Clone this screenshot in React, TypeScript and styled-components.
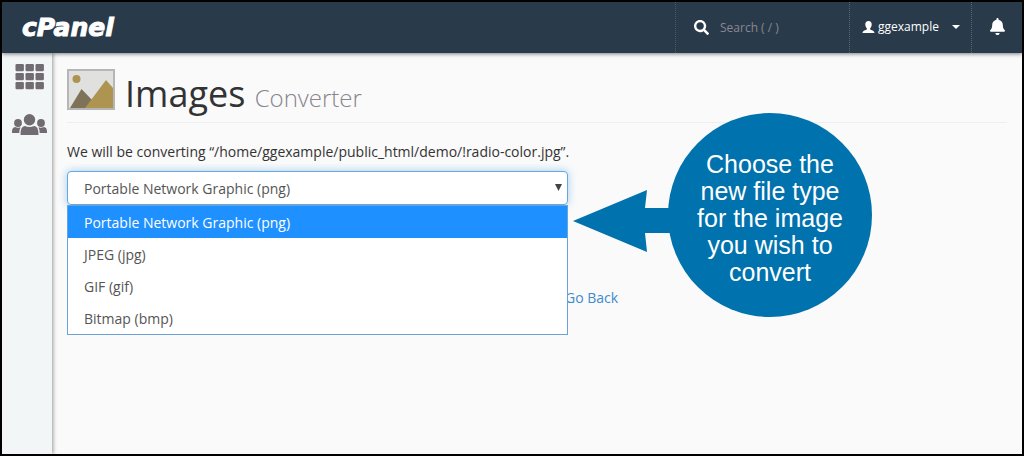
import React from "react";
import styled, { createGlobalStyle } from "styled-components";
import { FaSearch, FaBell } from "react-icons/fa";

const GlobalStyle = createGlobalStyle`
  *, *::before, *::after { box-sizing: border-box; }
  body {
    margin: 0;
    background: #fafafa;
    color: #333;
    font: 14px/20px "Open Sans", sans-serif;
  }
`;

const Frame = styled.div`
  display: flex;
  flex-direction: column;
  min-height: 100vh;
  border: 2px solid #000;
  position: relative;
  overflow: hidden;
`;

const Header = styled.header`
  display: flex;
  align-items: stretch;
  justify-content: space-between;
  height: 51px;
  background: #293a4a;
  color: #fff;
  box-shadow: 0 1px 4px rgba(0, 0, 0, 0.5);
  z-index: 1;
`;

const Logo = styled.a`
  display: flex;
  align-items: center;
  padding-left: 20px;
  color: #fff;
  font: italic bold 25px/25px "DejaVu Sans", sans-serif;
  -webkit-text-stroke: 1px #fff;
  text-decoration: none;
`;

const Tools = styled.div`
  display: flex;
  align-items: stretch;
`;

const SearchBox = styled.label`
  display: flex;
  align-items: center;
  gap: 11px;
  width: 174px;
  padding-left: 18px;
  border-left: 1px dotted #4a5967;
`;

const SearchInput = styled.input`
  width: 110px;
  padding: 0;
  border: 0;
  outline: 0;
  background: transparent;
  color: #fff;
  font: 12px/20px "Open Sans", sans-serif;
  &::placeholder { color: #8b8791; opacity: 1; }
`;

const HeaderButton = styled.button<{ $width: number; $inset?: number }>`
  display: flex;
  align-items: center;
  gap: 3px;
  width: ${(p) => p.$width}px;
  padding: 0 0 2px ${(p) => p.$inset ?? 12}px;
  border: 0;
  border-left: 1px dotted #586673;
  background: transparent;
  color: #fff;
  font: 500 12px/20px "Open Sans", sans-serif;
`;

const Caret = styled.span`
  margin-left: 10px;
  border: 4px solid transparent;
  border-top-color: #fff;
  border-bottom: 0;
`;

const Body = styled.div`
  display: flex;
  flex: 1;
`;

const Sidebar = styled.nav`
  display: flex;
  flex-direction: column;
  gap: 24px;
  width: 50px;
  padding: 11px 0 0 10px;
  background: #f3f6f6;
  box-shadow: 1px 0 4px rgba(0, 0, 0, 0.4);
`;

const SideLink = styled.a`
  display: block;
  color: #716b72;
  svg { display: block; }
`;

const Main = styled.main`
  flex: 1;
  padding: 12px 0 0 15px;
`;

const TitleBar = styled.div`
  display: flex;
  align-items: flex-start;
  gap: 10px;
  height: 58px;
  padding-top: 4px;
  margin-right: 15px;
  border-bottom: 1px solid #eee;
`;

const Title = styled.h1`
  margin: 0;
  font-size: 36px;
  line-height: 49px;
  font-weight: 400;
  small {
    color: #88858d;
    font-size: 24px;
    font-weight: 300;
  }
`;

const Intro = styled.p`
  margin: 19px 0 9px;
`;

const Picker = styled.div`
  position: relative;
  width: 501px;
`;

const Select = styled.select`
  display: block;
  width: 100%;
  height: 34px;
  padding: 2px 16px 0;
  appearance: none;
  border: 1px solid #66a9e0;
  border-radius: 4px;
  outline: 0;
  background: #fff;
  box-shadow: 0 0 8px rgba(102, 175, 233, 0.6);
  color: #555;
  font: 14px/20px "Open Sans", sans-serif;
`;

const SelectArrow = styled.svg`
  position: absolute;
  top: 13px;
  right: 6px;
  pointer-events: none;
`;

const Options = styled.ul`
  position: absolute;
  top: 34px;
  left: 0;
  width: 100%;
  margin: 0;
  padding: 0;
  border: 1px solid #6ba2d8;
  background: #fff;
  list-style: none;
`;

const Option = styled.li<{ $active?: boolean }>`
  height: 32px;
  padding: 0 16px;
  line-height: 34px;
  color: ${(p) => (p.$active ? "#fff" : "#555")};
  background: ${(p) => (p.$active ? "#1e90ff" : "#fff")};
`;

const Back = styled.p`
  margin: 83px 0 0;
  padding-left: 498px;
  a { color: #428bca; text-decoration: none; }
`;

const Callout = styled.aside`
  position: absolute;
  top: 111px;
  left: 571px;
  display: flex;
  align-items: center;
`;

const Pointer = styled.svg`
  margin: 12px -6px 0 0;
`;

const Bubble = styled.p`
  display: flex;
  align-items: center;
  width: 204px;
  height: 204px;
  margin: 0;
  padding: 7px 26px 0;
  border-radius: 50%;
  background: #0072ad;
  color: #fff;
  font: 25px/27px "Liberation Sans", sans-serif;
  text-align: center;
`;

const GridIcon = () => (
  <svg width="33" height="26" viewBox="0 0 33 26" fill="currentColor" aria-hidden="true">
    {[0, 9, 18].map((y) =>
      [0, 10, 20].map((x) => <rect key={`${x}-${y}`} x={x + 3.5} y={y} width="8.4" height="7.2" rx="1.2" />)
    )}
  </svg>
);

const UsersIcon = () => (
  <svg width="35" height="22" viewBox="0 0 35 22" fill="currentColor" aria-hidden="true">
    <circle cx="17.5" cy="5.7" r="5.7" />
    <circle cx="6" cy="9" r="3.9" />
    <circle cx="29" cy="9" r="3.9" />
    <path d="M8.5 21q-.3-8.500 4.300-9 4.700 2 9.400 0 4.600.5 4.300 9z" />
    <path d="M0 19q-.3-5.500 3-6 3 1.200 5.600.3-1.200 2-1.300 5.700zM35 19q.3-5.500-3-6-3 1.200-5.600.3 1.200 2 1.300 5.700z" />
  </svg>
);

const UserIcon = () => (
  <svg width="13" height="12" viewBox="0 0 12 12" fill="currentColor" aria-hidden="true">
    <path d="M6 0c2.200 0 3.200 1.300 3.200 3.300 0 1.700-.6 3-1.500 3.900v1.200c.8.700 4.300 1 4.300 3.600H0c0-2.600 3.500-2.900 4.300-3.600V7.200C3.400 6.300 2.800 5 2.800 3.300 2.800 1.300 3.800 0 6 0z" />
  </svg>
);

const PictureIcon = () => (
  <svg width="48" height="41" viewBox="0 0 48 41" aria-hidden="true">
    <rect x="1" y="1" width="46" height="39" fill="#e0e0de" stroke="#b6b6b6" strokeWidth="2" />
    <circle cx="9.5" cy="10" r="4" fill="#ae9451" />
    <path d="M3 39 14.500 20 27 33v6z" fill="#7e7258" />
    <path d="M18 39 39 11l7 8v20z" fill="#ae9451" />
  </svg>
);

const formats = ["Portable Network Graphic (png)", "JPEG (jpg)", "GIF (gif)", "Bitmap (bmp)"];

export default function App() {
  return (
    <Frame>
      <GlobalStyle />
      <Header>
        <Logo href="#home">cPanel</Logo>
        <Tools>
          <SearchBox>
            <FaSearch size={15} aria-hidden="true" />
            <SearchInput type="text" placeholder="Search ( / )" aria-label="Search" />
          </SearchBox>
          <HeaderButton type="button" $width={122}>
            <UserIcon />
            ggexample
            <Caret />
          </HeaderButton>
          <HeaderButton type="button" $width={51} $inset={17} aria-label="Notifications">
            <FaBell size={17} aria-hidden="true" />
          </HeaderButton>
        </Tools>
      </Header>
      <Body>
        <Sidebar>
          <SideLink href="#apps" aria-label="Applications"><GridIcon /></SideLink>
          <SideLink href="#users" aria-label="Users"><UsersIcon /></SideLink>
        </Sidebar>
        <Main>
          <TitleBar>
            <PictureIcon />
            <Title>Images <small>Converter</small></Title>
          </TitleBar>
          <Intro>We will be converting “/home/ggexample/public_html/demo/!radio-color.jpg”.</Intro>
          <Picker>
            <Select aria-label="New file type" defaultValue={formats[0]}>
              {formats.map((f) => <option key={f}>{f}</option>)}
            </Select>
            <SelectArrow width="7" height="7" viewBox="0 0 7 7" aria-hidden="true">
              <path d="M0 0h7L3.500 7z" fill="#444" />
            </SelectArrow>
            <Options role="listbox" aria-label="File types">
              {formats.map((f, i) => (
                <Option key={f} role="option" aria-selected={i === 0} $active={i === 0}>{f}</Option>
              ))}
            </Options>
          </Picker>
          <Back><a href="#back">Go Back</a></Back>
        </Main>
      </Body>
      <Callout>
        <Pointer width="101" height="62" viewBox="0 0 101 62" aria-hidden="true">
          <path d="M0 31 74 0l-2 18h29v25H72l2 19z" fill="#0072ad" />
        </Pointer>
        <Bubble>Choose the new file type for the image you wish to convert</Bubble>
      </Callout>
    </Frame>
  );
}
